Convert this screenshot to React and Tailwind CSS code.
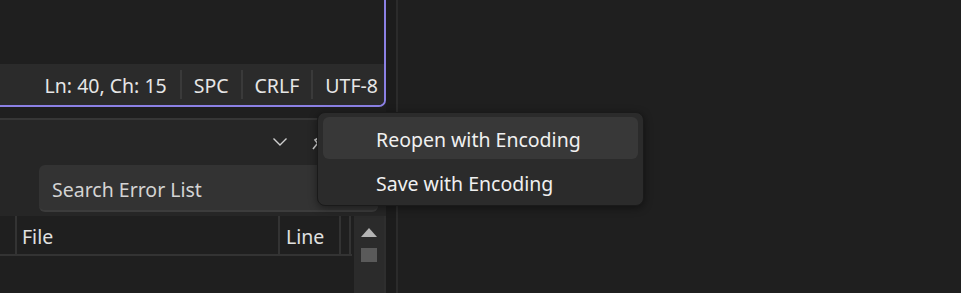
import React from "react";

const font = { fontFamily: '"Noto Sans", "Open Sans", sans-serif' };

function Sep() {
  return <div className="w-[2px] h-[29px] bg-[#3a3a3a]" />;
}

export default function App() {
  return (
    <div
      className="relative w-[961px] h-[293px] overflow-hidden bg-[#1f1f1f] text-[#e6e6e6] flex flex-row"
      style={font}
    >
      {/* Left column */}
      <div className="w-[386px] flex flex-col shrink-0">
        {/* Editor */}
        <div className="h-[107px] flex flex-col border-r-2 border-b-2 border-[#8b80e4] rounded-br-[7px] overflow-hidden shrink-0">
          <div className="flex-1 bg-[#1f1f1f]" />
          <div className="h-[41px] bg-[#2b2b2b] flex items-center justify-end pr-[6px] gap-[12px] text-[19.5px] leading-none">
            <span className="pt-[3px] mr-[1px]">Ln: 40, Ch: 15</span>
            <Sep />
            <span className="pt-[3px]">SPC</span>
            <Sep />
            <span className="pt-[3px]">CRLF</span>
            <Sep />
            <span className="pt-[3px]">UTF-8</span>
          </div>
        </div>
        <div className="h-[11px] shrink-0" />
        {/* Error list panel */}
        <div className="flex-1 flex flex-col bg-[#262626] border-t-2 border-[#363636]">
          <div className="h-[45px] flex items-center justify-end pr-[62px] gap-[22px] shrink-0">
            <svg width="16" height="10" viewBox="0 0 16 10" fill="none" className="mb-[2px]">
              <path d="M1.5 1.5 L8 8 L14.5 1.5" stroke="#cfcfcf" strokeWidth="1.4" />
            </svg>
            <svg width="14" height="16" viewBox="0 0 14 16" fill="none">
              <path d="M3 14 L7 9 M5 5 L10 2 L12 6 L8 9 Z" stroke="#cfcfcf" strokeWidth="1.6" />
            </svg>
          </div>
          <div className="ml-[39px] mr-[8px] h-[47px] bg-[#333333] rounded-[6px] border-b-2 border-[#3c3c3c] flex items-center pl-[13px] pt-[4px] text-[19.5px] text-[#d4d4d4] shrink-0">
            Search Error List
          </div>
          <div className="h-[4px] shrink-0" />
          <div className="flex-1 flex flex-row bg-[#1f1f1f]">
            <div className="w-[352px] flex flex-col">
              <div className="h-[40px] flex flex-row items-stretch border-b-2 border-[#333333] text-[19.5px] text-[#e0e0e0]">
                <div className="w-[17px] border-r-2 border-[#333333]" />
                <div className="w-[263px] border-r-2 border-[#333333] flex items-center pl-[5px] pt-[4px]">File</div>
                <div className="w-[61px] border-r-2 border-[#333333] flex items-center pl-[6px] pt-[4px]">Line</div>
                <div className="w-[10px] border-r-2 border-[#333333]" />
              </div>
            </div>
            <div className="w-[2px]" />
            <div className="w-[30px] bg-[#2b2b2b] flex flex-col items-center pt-[12px]">
              <svg width="16" height="9" viewBox="0 0 16 9">
                <path d="M8 0 L16 9 L0 9 Z" fill="#b4b4b4" />
              </svg>
              <div className="mt-[11px] w-[16px] h-[14px] bg-[#5a5a5a]" />
            </div>
            <div className="w-[2px] bg-[#2e2e2e]" />
          </div>
        </div>
      </div>
      {/* Splitter */}
      <div className="w-[10px] bg-[#1c1c1c] shrink-0" />
      <div className="w-[2px] bg-[#2b2b2b] shrink-0" />
      <div className="flex-1 bg-[#1f1f1f]" />

      {/* Context menu */}
      <div className="absolute left-[317px] top-[112px] w-[327px] h-[94px] bg-[#2b2b2b] border border-[#1a1a1a] rounded-[8px] shadow-[0_2px_8px_rgba(0,0,0,0.45)] px-[5px] pt-[4px] flex flex-col gap-[2px] text-[19.5px] text-[#f0f0f0]">
        <div className="h-[42px] bg-[#383838] rounded-[6px] flex items-center pl-[53px] pt-[4px]">
          Reopen with Encoding
        </div>
        <div className="h-[42px] rounded-[6px] flex items-center pl-[53px] pt-[4px]">
          Save with Encoding
        </div>
      </div>
    </div>
  );
}
